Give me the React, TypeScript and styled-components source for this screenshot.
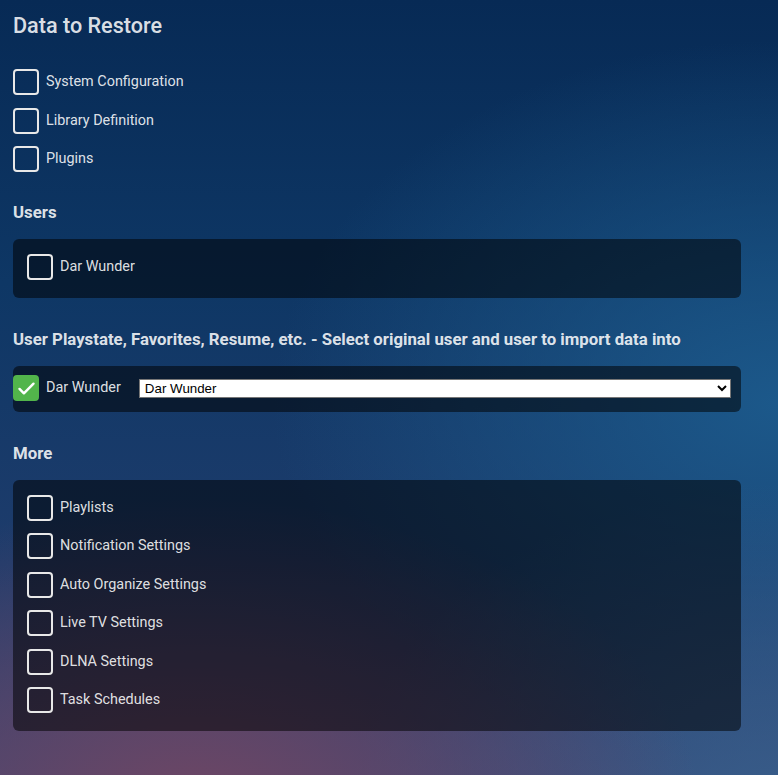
import React, { useState } from 'react';
import styled, { createGlobalStyle } from 'styled-components';

// 페이지 전체 배경과 기본 폰트
const GlobalStyle = createGlobalStyle`
  html, body {
    margin: 0;
    padding: 0;
  }
  body {
    min-height: 775px;
    font-family: Roboto, 'Noto Sans', sans-serif;
    color: rgba(255, 255, 255, 0.87);
    background-color: #0f3560;
    background-image:
      radial-gradient(ellipse 65% 38% at 25% 100%, rgba(110, 70, 100, 1), rgba(110, 70, 100, 0) 100%),
      radial-gradient(ellipse 55% 40% at 100% 100%, rgba(55, 95, 140, 0.9), rgba(55, 95, 140, 0) 100%),
      radial-gradient(ellipse 65% 45% at 100% 50%, rgba(28, 90, 140, 0.95), rgba(28, 90, 140, 0) 100%),
      linear-gradient(to bottom, #072a55 0%, #0e3765 35%, #1e3c6c 70%, #3a4775 100%);
  }
`;

const Page = styled.div`
  padding: 13px 37px 44px 13px;
`;

const PageTitle = styled.h2`
  margin: 0 0 30px;
  font-size: 21.6px;
  font-weight: 500;
  line-height: 26px;
`;

const SectionTitle = styled.h3`
  margin: 0 0 17px;
  font-size: 16.8px;
  font-weight: 700;
  line-height: 20px;
`;

const List = styled.div`
  display: flex;
  flex-direction: column;
  gap: 12.5px;
  margin-bottom: 30px;
`;

// 어두운 반투명 패널
const Panel = styled.div<{ $pad: string }>`
  display: flex;
  flex-direction: column;
  gap: 12.4px;
  padding: ${(p) => p.$pad};
  background: rgba(0, 0, 0, 0.52);
  border-radius: 6px;
  margin-bottom: 31px;
`;

const Row = styled.label`
  display: flex;
  align-items: center;
  gap: 7px;
  font-size: 14.4px;
  line-height: 26px;
  cursor: pointer;
`;

const Box = styled.span<{ $checked: boolean }>`
  box-sizing: border-box;
  flex: none;
  width: 26px;
  height: 26px;
  border-radius: 4px;
  border: 2px solid ${(p) => (p.$checked ? '#52b54b' : '#e8e8e8')};
  background: ${(p) => (p.$checked ? '#52b54b' : 'transparent')};
  display: flex;
  align-items: center;
  justify-content: center;
`;

const UserRow = styled.div`
  display: flex;
  align-items: center;
  gap: 18px;
`;

const Select = styled.select`
  flex: 1;
  height: 19px;
  margin-top: 1px;
  padding: 0 1px;
  font-family: 'Liberation Sans', Arial, sans-serif;
  font-size: 13.33px;
  color: #000;
  background: #fff;
  border: 1px solid #767676;
  border-radius: 0;
`;

const Check = ({ checked }: { checked: boolean }) => (
  <Box $checked={checked}>
    {checked && (
      <svg width="21" height="21" viewBox="0 0 24 24" fill="none">
        <path d="M4 12.5l5 5L20 6.5" stroke="#fff" strokeWidth="2.8" strokeLinecap="round" strokeLinejoin="round" />
      </svg>
    )}
  </Box>
);

const CheckRow = ({ label, initial = false }: { label: string; initial?: boolean }) => {
  const [checked, setChecked] = useState(initial);
  return (
    <Row onClick={() => setChecked(!checked)}>
      <Check checked={checked} />
      {label}
    </Row>
  );
};

const dataItems = ['System Configuration', 'Library Definition', 'Plugins'];
const moreItems = [
  'Playlists',
  'Notification Settings',
  'Auto Organize Settings',
  'Live TV Settings',
  'DLNA Settings',
  'Task Schedules',
];

const App = () => {
  return (
    <Page>
      <GlobalStyle />
      <PageTitle>Data to Restore</PageTitle>
      <List>
        {dataItems.map((item) => (
          <CheckRow key={item} label={item} />
        ))}
      </List>

      <SectionTitle>Users</SectionTitle>
      <Panel $pad="15px 14px 18px">
        <CheckRow label="Dar Wunder" />
      </Panel>

      <SectionTitle>User Playstate, Favorites, Resume, etc. - Select original user and user to import data into</SectionTitle>
      <Panel $pad="9px 10px 11px 0">
        <UserRow>
          <CheckRow label="Dar Wunder" initial />
          <Select defaultValue="dar">
            <option value="dar">Dar Wunder</option>
          </Select>
        </UserRow>
      </Panel>

      <SectionTitle>More</SectionTitle>
      <Panel $pad="15px 14px 18px">
        {moreItems.map((item) => (
          <CheckRow key={item} label={item} />
        ))}
      </Panel>
    </Page>
  );
};

export default App;
